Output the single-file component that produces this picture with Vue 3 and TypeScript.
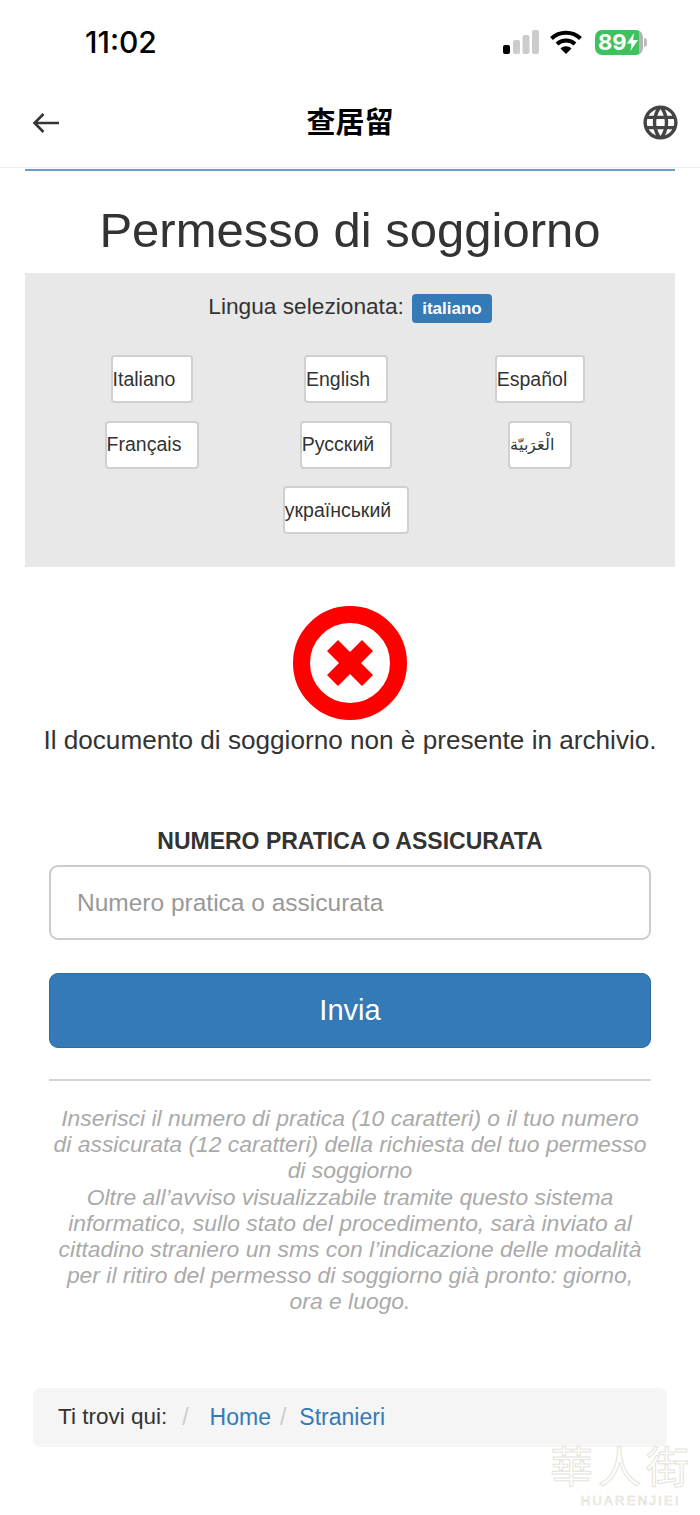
<template>
  <div class="page">
    <div class="status-bar">
      <span class="time">11:02</span>
      <div class="status-icons">
        <svg class="signal" width="36" height="24" viewBox="0 0 36 24">
          <rect x="0" y="15" width="7" height="9" rx="2" fill="#000" />
          <rect x="10" y="10" width="7" height="14" rx="2" fill="#ccc" />
          <rect x="19.500" y="5" width="7" height="19" rx="2" fill="#ccc" />
          <rect x="29" y="0" width="7" height="24" rx="2" fill="#ccc" />
        </svg>
        <svg class="wifi" width="32" height="24" viewBox="0 0 32 24">
          <path d="M1.500 8.500C9.500 0.800 22.500 0.800 30.500 8.500" fill="none" stroke="#000" stroke-width="4" />
          <path d="M7 14C12 9.400 20 9.400 25 14" fill="none" stroke="#000" stroke-width="4" />
          <path d="M10.500 18.500C13.500 15.400 18.500 15.400 21.500 18.500L16 24Z" fill="#000" />
        </svg>
        <div class="battery">
          <div class="battery-body">
            <span>89</span>
            <svg width="11" height="18" viewBox="0 0 11 18"><path d="M7 0L0 10.500H4.500L3.500 18L11 7H6Z" fill="#fff" /></svg>
          </div>
          <div class="battery-nub"></div>
        </div>
      </div>
    </div>

    <header class="nav">
      <svg class="back" width="30" height="24" viewBox="0 0 30 24">
        <path d="M28 12H4M12.500 3L3.500 12L12.500 21" fill="none" stroke="#33343c" stroke-width="2.600" />
      </svg>
      <span class="nav-title">查居留</span>
      <svg class="globe" width="41" height="41" viewBox="0 0 24 24">
        <path fill="#444" d="M11.990 2C6.470 2 2 6.480 2 12s4.470 10 9.990 10C17.520 22 22 17.520 22 12S17.520 2 11.990 2zm6.930 6h-2.950c-.32-1.250-.78-2.450-1.380-3.560 1.840.63 3.370 1.910 4.330 3.560zM12 4.040c.83 1.200 1.480 2.530 1.910 3.960h-3.820c.43-1.430 1.080-2.760 1.910-3.960zM4.260 14C4.100 13.360 4 12.690 4 12s.1-1.360.26-2h3.380c-.08.66-.14 1.320-.14 2 0 .68.06 1.340.14 2H4.260zm.82 2h2.950c.32 1.250.78 2.450 1.380 3.560-1.840-.63-3.370-1.900-4.330-3.560zm2.950-8H5.080c.96-1.660 2.490-2.930 4.330-3.560C8.810 5.550 8.350 6.750 8.030 8zM12 19.960c-.83-1.200-1.480-2.530-1.910-3.960h3.820c-.43 1.430-1.080 2.760-1.910 3.960zM14.340 14H9.660c-.09-.66-.16-1.320-.16-2 0-.68.07-1.350.16-2h4.680c.09.65.16 1.320.16 2 0 .68-.07 1.340-.16 2zm.25 5.560c.6-1.110 1.060-2.310 1.380-3.560h2.950c-.96 1.650-2.490 2.930-4.330 3.560zM16.360 14c.08-.66.14-1.320.14-2 0-.68-.06-1.340-.14-2h3.380c.16.64.26 1.310.26 2s-.1 1.360-.26 2h-3.380z" />
      </svg>
    </header>

    <main class="content">
      <h1>Permesso di soggiorno</h1>

      <section class="lang-panel">
        <p class="lang-current">
          Lingua selezionata:
          <span class="label">italiano</span>
        </p>
        <div class="lang-grid">
          <div v-for="lang in languages" :key="lang.name" class="lang-cell">
            <button class="lang-btn" :class="{ arabic: lang.arabic }">{{ lang.name }}</button>
          </div>
        </div>
      </section>

      <section class="result">
        <svg width="116" height="116" viewBox="0 0 116 116">
          <circle cx="58" cy="58" r="48.500" fill="#fff" stroke="#f00" stroke-width="17" />
          <path d="M58 47L70 35L81 46L69 58L81 70L70 81L58 69L46 81L35 70L47 58L35 46L46 35Z" fill="#f00" />
        </svg>
        <p>Il documento di soggiorno non è presente in archivio.</p>
      </section>

      <form class="search" @submit.prevent>
        <label for="pratica">NUMERO PRATICA O ASSICURATA</label>
        <input id="pratica" type="text" placeholder="Numero pratica o assicurata" />
        <button type="submit" class="submit">Invia</button>
        <hr />
        <p class="help">
          Inserisci il numero di pratica (10 caratteri) o il tuo numero di assicurata (12 caratteri) della richiesta del tuo permesso di soggiorno<br />
          Oltre all’avviso visualizzabile tramite questo sistema informatico, sullo stato del procedimento, sarà inviato al cittadino straniero un sms con l’indicazione delle modalità per il ritiro del permesso di soggiorno già pronto: giorno, ora e luogo.
        </p>
      </form>

      <nav class="breadcrumb">
        <span class="crumb-label">Ti trovi qui:</span>
        <span class="sep first">/</span>
        <a href="#">Home</a>
        <span class="sep">/</span>
        <a href="#">Stranieri</a>
      </nav>
    </main>

    <div class="watermark">
      <span class="wm-cn">華人街</span>
      <span class="wm-en">HUARENJIEI</span>
    </div>
  </div>
</template>

<script setup lang="ts">
interface Language {
  name: string;
  arabic?: boolean;
}

const languages: Language[] = [
  { name: "Italiano" },
  { name: "English" },
  { name: "Español" },
  { name: "Français" },
  { name: "Русский" },
  { name: "الْعَرَبيّة", arabic: true },
  { name: "український" },
];
</script>

<style>
html,
body {
  margin: 0;
  background: #fff;
}
</style>

<style scoped>
.page {
  position: relative;
  width: 700px;
  height: 1515px;
  overflow: hidden;
  background: #fff;
  color: #333;
  font-family: "Liberation Sans", Arial, sans-serif;
}

/* status bar */
.status-bar {
  display: flex;
  justify-content: space-between;
  align-items: center;
  height: 84px;
  padding: 0 53px 0 85px;
  box-sizing: border-box;
}

.time {
  font-family: Inter, "Liberation Sans", sans-serif;
  font-size: 30px;
  font-weight: 500;
  color: #000;
}

.status-icons {
  display: flex;
  align-items: center;
}

.signal {
  margin-right: 11px;
}

.wifi {
  margin-right: 13px;
}

.battery {
  display: flex;
  align-items: center;
}

.battery-body {
  display: flex;
  align-items: center;
  box-sizing: border-box;
  width: 48px;
  height: 25px;
  padding-left: 3px;
  border-radius: 7px;
  background: linear-gradient(to right, #3fc15d 44px, #b5b5b5 44px);
  color: #fff;
  font-family: Inter, "Liberation Sans", sans-serif;
  font-size: 22px;
  font-weight: 700;
}

.battery-nub {
  width: 3px;
  height: 9px;
  margin-left: 1px;
  border-radius: 0 3px 3px 0;
  background: #bbb;
}

/* top nav */
.nav {
  display: flex;
  justify-content: space-between;
  align-items: center;
  height: 84px;
  padding: 0 19px 6px 31px;
  box-sizing: border-box;
  border-bottom: 1px solid #eee;
}

.nav-title {
  position: absolute;
  left: 0;
  right: 0;
  margin-bottom: 6px;
  text-align: center;
  font-family: "Noto Sans CJK SC", sans-serif;
  font-size: 29px;
  font-weight: 700;
  color: #000;
}

/* main */
.content {
  margin: 1px 25px 0;
  border-top: 2px solid #6b9fc6;
}

h1 {
  margin: 33px 0 16px;
  text-align: center;
  font-size: 49px;
  font-weight: 400;
  line-height: 53px;
  color: #333;
}

.lang-panel {
  height: 294px;
  padding-top: 18px;
  box-sizing: border-box;
  background: #e8e8e8;
}

.lang-current {
  margin: 0 0 32px;
  text-align: center;
  font-size: 22.700px;
  line-height: 30px;
}

.label {
  display: inline-block;
  margin: 3px 0 0 2px;
  padding: 0 10px;
  border-radius: 4px;
  background: #337ab7;
  color: #fff;
  font-size: 17px;
  font-weight: 700;
  line-height: 29px;
  vertical-align: top;
}

.lang-grid {
  display: grid;
  grid-template-columns: repeat(3, 194px);
  justify-content: center;
  row-gap: 17.500px;
  padding-right: 8px;
}

.lang-cell {
  display: flex;
  justify-content: center;
}

.lang-cell:last-child {
  grid-column: 2;
}

.lang-btn {
  height: 48px;
  padding: 0 16px 0 0;
  border: 2px solid #d0d0d0;
  border-radius: 4px;
  background: #fff;
  color: #333;
  font-family: inherit;
  font-size: 19.500px;
}

.lang-btn.arabic {
  font-size: 16px;
}

.result {
  display: flex;
  flex-direction: column;
  align-items: center;
  padding-top: 38px;
}

.result p {
  margin: 3px 0 0;
  font-size: 26.150px;
  line-height: 32px;
  white-space: nowrap;
}

.search {
  display: flex;
  flex-direction: column;
  padding: 0 24px;
  margin-top: 71px;
}

.search label {
  text-align: center;
  font-size: 23px;
  font-weight: 700;
  line-height: 28px;
  margin-bottom: 10px;
}

.search input {
  height: 75px;
  padding: 0 26px;
  box-sizing: border-box;
  border: 2px solid #ccc;
  border-radius: 9px;
  font-family: inherit;
  font-size: 24.500px;
  color: #333;
  outline: none;
}

.search input::placeholder {
  color: #999;
  opacity: 1;
}

.submit {
  height: 75px;
  margin-top: 33px;
  border: 1px solid #2e6da4;
  border-radius: 9px;
  background: #337ab7;
  color: #fff;
  font-family: inherit;
  font-size: 29px;
}

.search hr {
  width: 100%;
  margin: 31px 0 0;
  border: 0;
  border-top: 2px solid #d4d4d4;
}

.help {
  margin: 24px 0 0;
  padding: 0 4px;
  text-align: center;
  font-size: 22.900px;
  font-style: italic;
  line-height: 26.200px;
  color: #aaa;
}

.breadcrumb {
  display: flex;
  align-items: center;
  height: 59px;
  margin: 73px 8px 0;
  padding-left: 25px;
  border-radius: 8px;
  background: #f5f5f5;
  font-size: 23px;
}

.crumb-label {
  color: #333;
  font-size: 22.500px;
}

.breadcrumb a {
  color: #337ab7;
  text-decoration: none;
}

.sep {
  margin: 0 13px 0 9px;
  color: #ccc;
}

.sep.first {
  margin: 0 21px 0 15px;
}

/* forum watermark */
.watermark {
  position: absolute;
  left: 548px;
  top: 1443px;
  display: flex;
  flex-direction: column;
  align-items: flex-end;
  width: 146px;
}

.wm-cn {
  font-family: "Liberation Sans", "Noto Sans CJK TC", sans-serif;
  font-size: 43px;
  line-height: 50px;
  letter-spacing: 5px;
  color: #fff;
  -webkit-text-stroke: 1px #e6e3da;
}

.wm-en {
  margin-right: 13px;
  font-size: 13px;
  line-height: 15px;
  letter-spacing: 2.300px;
  color: #fff;
  -webkit-text-stroke: 0.600px #dedbd0;
}
</style>
